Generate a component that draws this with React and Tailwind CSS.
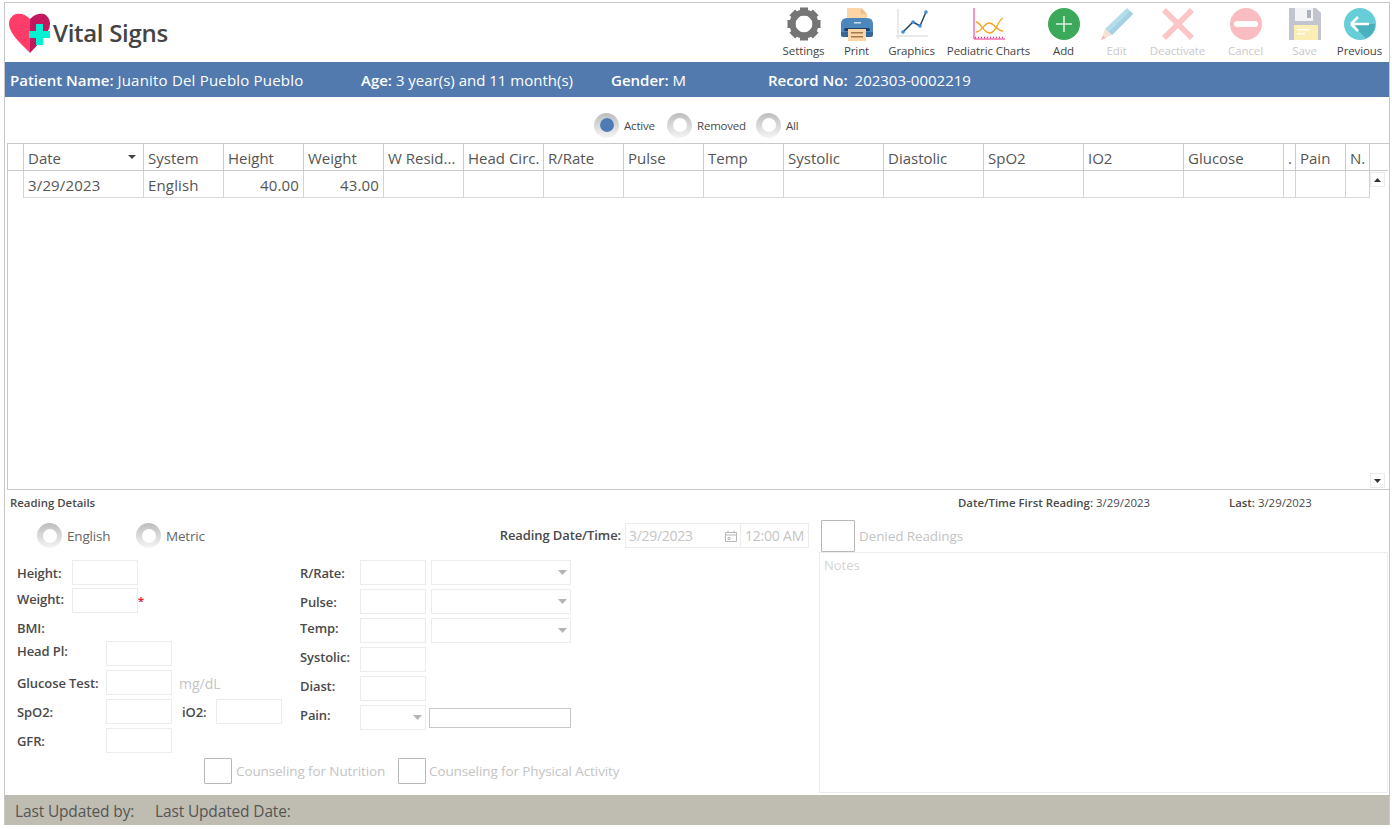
import React from "react";

const FONT = { fontFamily: '"Open Sans", "Noto Sans", sans-serif' };

const COLUMNS = [
  { label: "", width: "w-[16px]" },
  { label: "Date", width: "w-[120px]", value: "3/29/2023", sort: true },
  { label: "System", width: "w-[80px]", value: "English" },
  { label: "Height", width: "w-[80px]", value: "40.00", right: true },
  { label: "Weight", width: "w-[80px]", value: "43.00", right: true },
  { label: "W Resid...", width: "w-[80px]" },
  { label: "Head Circ.", width: "w-[80px]" },
  { label: "R/Rate", width: "w-[80px]" },
  { label: "Pulse", width: "w-[80px]" },
  { label: "Temp", width: "w-[80px]" },
  { label: "Systolic", width: "w-[100px]" },
  { label: "Diastolic", width: "w-[100px]" },
  { label: "SpO2", width: "w-[100px]" },
  { label: "IO2", width: "w-[100px]" },
  { label: "Glucose", width: "w-[100px]" },
  { label: ".", width: "w-[12px]" },
  { label: "Pain", width: "w-[50px]" },
  { label: "N.", width: "w-[24px]" },
];

const GearIcon = () => (
  <svg width="34" height="34" viewBox="0 0 34 34">
    {[0, 45, 90, 135, 180, 225, 270, 315].map((a) => (
      <rect key={a} x="13" y="0.5" width="8" height="8" fill="#757575" transform={`rotate(${a} 17 17)`} />
    ))}
    <circle cx="17" cy="17" r="11.5" fill="none" stroke="#757575" strokeWidth="6" />
  </svg>
);

const PrintIcon = () => (
  <svg width="34" height="34" viewBox="0 0 34 34">
    <path d="M7 1h14l6 6v8H7z" fill="#fcd5a6" />
    <path d="M21 1l6 6h-6z" fill="#eebd85" />
    <path d="M1 17q0-6 6-6h20q6 0 6 6v8H1z" fill="#4b86bd" />
    <path d="M1 25h32v3q0 2-2 2H3q-2 0-2-2z" fill="#33689e" />
    <rect x="4" y="21" width="26" height="3" rx="1.5" fill="#1f3f66" />
    <rect x="14" y="15" width="7" height="1.5" fill="#cfe0ef" />
    <rect x="8" y="22" width="18" height="12" fill="#fcd5a6" />
    <rect x="11" y="25" width="12" height="1.5" fill="#a07a50" />
    <rect x="11" y="29" width="12" height="1.5" fill="#a07a50" />
  </svg>
);

const GraphIcon = () => (
  <svg width="34" height="34" viewBox="0 0 34 34">
    <path d="M3 2v30M1 29h32" stroke="#e4e4e4" strokeWidth="1.5" fill="none" />
    <path d="M8 25l10-10 7 4 6-14" stroke="#23466f" strokeWidth="1.5" fill="none" />
    <circle cx="8" cy="25" r="1.8" fill="#3f92dd" />
    <circle cx="18" cy="15" r="1.8" fill="#3f92dd" />
    <circle cx="25" cy="19" r="1.8" fill="#3f92dd" />
    <circle cx="31" cy="5" r="1.8" fill="#3f92dd" />
  </svg>
);

const ChartIcon = () => (
  <svg width="34" height="34" viewBox="0 0 34 34">
    <path d="M2 1v31h31" stroke="#f0288c" strokeWidth="1" fill="none" />
    <path d="M3 30.5h30" stroke="#f0288c" strokeWidth="1.5" strokeDasharray="1 2" fill="none" />
    <path d="M4 15c5 0 7 11 14 11 6 0 8-13 13-15" stroke="#f5a21f" strokeWidth="1.3" fill="none" />
    <path d="M4 25c6 0 8-9 13-9 6 0 7 8 14 8" stroke="#f5a21f" strokeWidth="1.3" fill="none" />
  </svg>
);

const AddIcon = () => (
  <svg width="34" height="34" viewBox="0 0 34 34">
    <circle cx="17" cy="17" r="16" fill="#3ca85a" />
    <path d="M17 9v16M9 17h16" stroke="#d8f0de" strokeWidth="1.6" />
  </svg>
);

const EditIcon = () => (
  <svg width="34" height="34" viewBox="0 0 34 34">
    <path d="M27 1l6 6-21 21-7-6z" fill="#b5dcea" />
    <path d="M30 4l3 3-21 21-3-3z" fill="#a4d0e2" />
    <path d="M5 22l7 6-11 5z" fill="#f6e2d4" />
    <path d="M3 29l3 2-5 2z" fill="#f4b6bd" />
  </svg>
);

const DeactivateIcon = () => (
  <svg width="34" height="34" viewBox="0 0 34 34">
    <path d="M5 1l12 12L29 1l4 4-12 12 12 12-4 4-12-12L5 33l-4-4 12-12L1 5z" fill="#fdc6c6" />
  </svg>
);

const CancelIcon = () => (
  <svg width="34" height="34" viewBox="0 0 34 34">
    <circle cx="17" cy="17" r="16" fill="#f8bcc1" />
    <rect x="5" y="14" width="24" height="6" rx="3" fill="#ffffff" />
  </svg>
);

const SaveIcon = () => (
  <svg width="34" height="34" viewBox="0 0 34 34">
    <path d="M1 1h27l5 5v27H1z" fill="#c2c5cf" />
    <rect x="7" y="1" width="18" height="13" fill="#f4f4f6" />
    <rect x="19" y="3" width="4" height="8" fill="#aeb2bc" />
    <rect x="6" y="18" width="24" height="15" fill="#fbeeb4" />
    <rect x="9" y="22" width="12" height="1.5" fill="#ffffff" />
    <rect x="9" y="26" width="8" height="1.5" fill="#ffffff" />
  </svg>
);

const PreviousIcon = () => (
  <svg width="34" height="34" viewBox="0 0 34 34">
    <circle cx="17" cy="17" r="16" fill="#67cdd8" />
    <path d="M13 17h19a16 16 0 0 1-9 14.5L13 21z" fill="#4bb0bd" />
    <path d="M8 17h18M8 17l7-7M8 17l7 7" stroke="#ffffff" strokeWidth="2.6" fill="none" />
  </svg>
);

const TOOLBAR = [
  { label: "Settings", width: "w-[53px]", icon: <GearIcon /> },
  { label: "Print", width: "w-[53px]", icon: <PrintIcon /> },
  { label: "Graphics", width: "w-[57px]", icon: <GraphIcon /> },
  { label: "Pediatric Charts", width: "w-[97px]", icon: <ChartIcon /> },
  { label: "Add", width: "w-[53px]", icon: <AddIcon /> },
  { label: "Edit", width: "w-[53px]", icon: <EditIcon />, disabled: true },
  { label: "Deactivate", width: "w-[69px]", icon: <DeactivateIcon />, disabled: true },
  { label: "Cancel", width: "w-[67px]", icon: <CancelIcon />, disabled: true },
  { label: "Save", width: "w-[51px]", icon: <SaveIcon />, disabled: true },
  { label: "Previous", width: "w-[59px]", icon: <PreviousIcon /> },
];

const Logo = () => (
  <svg width="42" height="40" viewBox="0 0 42 40">
    <path d="M21 6C17 1 11 0 7 1 2 3 0 7 0 11c0 9 12 20 20 28l1 1z" fill="#ff3d68" />
    <path d="M21 6c4-5 10-6 14-5 4 2 6 6 6 10 0 9-12 20-20 29z" fill="#c2185f" />
    <path d="M27 11h7v7h7v7h-7v7h-7v-7h-7v-7h7z" fill="#05efd0" />
  </svg>
);

const Radio = ({ checked }) => (
  <span className="flex h-[25px] w-[25px] shrink-0 items-center justify-center rounded-full bg-linear-to-b from-[#bdbdbd] to-[#f5f5f5]">
    <span className="flex h-[14px] w-[14px] items-center justify-center rounded-full bg-white">
      {checked && <span className="block h-[14px] w-[14px] rounded-full bg-[#4f7bb5]" />}
    </span>
  </span>
);

const Field = ({ className = "w-[66px]" }) => (
  <div className={`h-[25px] shrink-0 border border-[#ececec] bg-white ${className}`} />
);

const Caret = () => (
  <svg width="9" height="5" viewBox="0 0 9 5" className="shrink-0">
    <path d="M0 0h9L4.5 5z" fill="#b4b4b4" />
  </svg>
);

const SelectField = ({ className = "w-[140px]" }) => (
  <div className={`flex h-[25px] shrink-0 items-center justify-end border border-[#ececec] bg-white pr-[3px] ${className}`}>
    <Caret />
  </div>
);

const Label = ({ children, className = "" }) => (
  <span className={`shrink-0 whitespace-nowrap text-[13px] font-semibold tracking-[-0.1px] text-[#4a4a4a] ${className}`}>{children}</span>
);

const Check = ({ className = "" }) => (
  <span className={`block shrink-0 rounded-[1px] border border-[#b8b8b8] bg-white ${className}`} />
);

const VitalRow = ({ label, children, labelClass = "" }) => (
  <div className="flex h-[25px] items-center">
    <Label className={`w-[60px] ${labelClass}`}>{label}</Label>
    <Field />
    {children}
  </div>
);

export default function App() {
  return (
    <div className="h-[829px] w-full overflow-hidden bg-white pl-[4px] pt-[2px]" style={FONT}>
      <div className="flex h-[823px] w-[1386px] flex-col border-x border-t border-[#c8c8c8]">
        <header className="flex h-[59px] items-start justify-between">
          <div className="flex items-center pl-[4px] pt-[10px]">
            <Logo />
            <h1 className="ml-[2px] text-[24px] font-semibold leading-[40px] tracking-[-0.3px] text-[#444444]">Vital Signs</h1>
          </div>
          <div className="flex pt-[4px]">
            {TOOLBAR.map((item) => (
              <div key={item.label} className={`flex flex-col items-center ${item.width}`}>
                {item.icon}
                <span
                  className={`mt-[2px] whitespace-nowrap text-[11.5px] leading-[16px] tracking-[-0.1px] ${
                    item.disabled ? "text-[#c9c9c9]" : "text-[#444444]"
                  }`}
                >
                  {item.label}
                </span>
              </div>
            ))}
          </div>
        </header>

        <div className="flex h-[35px] items-center bg-[#527aae] pl-[5px] pt-[2px] text-[15px] text-white">
          <span className="w-[351px] whitespace-nowrap">
            <b className="font-semibold">Patient Name:</b> <span className="tracking-[0.2px]">Juanito Del Pueblo Pueblo</span>
          </span>
          <span className="w-[250px] whitespace-nowrap">
            <b className="font-semibold">Age:</b> 3 year(s) and 11 month(s)
          </span>
          <span className="w-[157px] whitespace-nowrap">
            <b className="font-semibold">Gender:</b> M
          </span>
          <span className="whitespace-nowrap">
            <b className="font-semibold">Record No:</b>
            <span className="ml-[7px]">202303-0002219</span>
          </span>
        </div>

        <div className="flex h-[46px] items-center pl-[589px] pt-[10px] text-[11.5px] tracking-[-0.2px] text-[#4a4a4a]">
          <Radio checked />
          <span className="ml-[5px] w-[43px] pt-[2px]">Active</span>
          <Radio />
          <span className="ml-[5px] w-[59px] pt-[2px]">Removed</span>
          <Radio />
          <span className="ml-[5px] pt-[2px]">All</span>
        </div>

        <section className="ml-[2px] flex h-[347px] flex-col border border-r-0 border-[#c8c8c8]">
          <div className="flex h-[27px] w-[1380px] border-b border-[#c8ccd2]">
            {COLUMNS.map((col, i) => (
              <div
                key={col.label + i}
                className={`relative flex shrink-0 items-center overflow-hidden whitespace-nowrap border-r border-[#c8ccd2] pl-[4px] pt-[2px] text-[15px] text-[#555555] ${col.width}`}
              >
                {col.label}
                {col.sort && (
                  <svg width="8" height="4" viewBox="0 0 8 4" className="absolute right-[7px] top-[11px]">
                    <path d="M0 0h8L4 4z" fill="#444444" />
                  </svg>
                )}
              </div>
            ))}
          </div>
          <div className="flex min-h-0 flex-1">
            <div className="flex h-[27px] w-[1361px]">
              {COLUMNS.map((col, i) => (
                <div
                  key={col.label + i}
                  className={`flex shrink-0 items-center whitespace-nowrap border-r border-[#d0d4da] px-[4px] pt-[2px] text-[15px] tracking-[0.15px] text-[#555555] ${
                    i === 0 ? "" : "border-b border-b-[#d8dade]"
                  } ${col.right ? "justify-end" : ""} ${col.width}`}
                >
                  {col.value}
                </div>
              ))}
            </div>
            <div className="ml-[1px] flex w-[16px] flex-col justify-between pb-[1px] pt-[1px]">
              <div className="flex h-[15px] w-[15px] items-center justify-center border border-[#ececec]">
                <svg width="7" height="4" viewBox="0 0 7 4"><path d="M3.5 0L7 4H0z" fill="#333333" /></svg>
              </div>
              <div className="flex h-[15px] w-[15px] items-center justify-center border border-[#ececec]">
                <svg width="7" height="4" viewBox="0 0 7 4"><path d="M0 0h7L3.5 4z" fill="#333333" /></svg>
              </div>
            </div>
          </div>
        </section>

        <div className="flex h-[26px] items-center pl-[5px] text-[11.4px] text-[#4a4a4a]">
          <b className="w-[948px] font-semibold">Reading Details</b>
          <span className="w-[271px] whitespace-nowrap">
            <b className="font-semibold">Date/Time First Reading:</b> 3/29/2023
          </span>
          <span className="whitespace-nowrap">
            <b className="font-semibold">Last:</b> 3/29/2023
          </span>
        </div>

        <div className="flex min-h-0 flex-1">
          <div className="w-[815px] shrink-0 pt-[7px]">
            <div className="flex h-[25px] items-center pl-[32px] text-[13.5px] tracking-[-0.2px] text-[#666666]">
              <Radio />
              <span className="ml-[5px] w-[69px] pt-[2px]">English</span>
              <Radio />
              <span className="ml-[5px] w-[289px] pt-[2px]">Metric</span>
              <Label className="w-[166px] text-right text-[13.5px]">Reading Date/Time:</Label>
              <div className="ml-[4px] flex h-[25px] w-[116px] items-center justify-between border border-[#ececec] px-[3px] text-[14px] text-[#c4c4c4]">
                <span className="tracking-[-0.3px]">3/29/2023</span>
                <svg width="12" height="12" viewBox="0 0 12 12" fill="none" stroke="#b8b8b8" strokeWidth="1">
                  <path d="M.5 2.5h11v9H.5zM.5 5h11M3 .5v2M9 .5v2M3 7.5h2v2H3z" />
                </svg>
              </div>
              <div className="flex h-[25px] w-[68px] items-center justify-center whitespace-nowrap border border-l-0 border-[#ececec] text-[14px] text-[#c4c4c4]">
                12:00 AM
              </div>
            </div>

            <div className="mt-[12px] flex pl-[12px]">
              <div className="w-[283px] shrink-0">
                <div className="flex h-[25px] items-center">
                  <Label className="w-[55px] pt-[2px]">Height:</Label>
                  <Field />
                </div>
                <div className="mt-[3px] flex h-[25px] items-center">
                  <Label className="w-[55px] pb-[2px]">Weight:</Label>
                  <Field />
                  <span className="text-[11px] font-bold leading-none text-[#ee2233]">*</span>
                </div>
                <div className="flex h-[28px] items-end">
                  <Label className="pb-[1px] leading-[24px]">BMI:</Label>
                </div>
                <div className="flex h-[25px] items-center">
                  <Label className="w-[89px] pb-[4px]">Head Pl:</Label>
                  <Field />
                </div>
                <div className="mt-[4px] flex h-[25px] items-center">
                  <Label className="w-[89px] pt-[2px]">Glucose Test:</Label>
                  <Field />
                  <span className="ml-[7px] pt-[2px] text-[14px] text-[#c4c4c4]">mg/dL</span>
                </div>
                <div className="mt-[4px] flex h-[25px] items-center">
                  <Label className="w-[89px] pt-[2px]">SpO2:</Label>
                  <Field />
                  <Label className="ml-[10px] w-[34px] pt-[2px]">iO2:</Label>
                  <Field />
                </div>
                <div className="mt-[4px] flex h-[25px] items-center">
                  <Label className="w-[89px] pt-[2px]">GFR:</Label>
                  <Field />
                </div>
              </div>

              <div className="flex flex-col gap-[4px]">
                <VitalRow label="R/Rate:" labelClass="pt-[2px]">
                  <SelectField className="ml-[5px] w-[140px]" />
                </VitalRow>
                <VitalRow label="Pulse:" labelClass="pt-[2px]">
                  <SelectField className="ml-[5px] w-[140px]" />
                </VitalRow>
                <VitalRow label="Temp:" labelClass="pb-[4px]">
                  <SelectField className="ml-[5px] w-[140px]" />
                </VitalRow>
                <VitalRow label="Systolic:" labelClass="pb-[4px]" />
                <VitalRow label="Diast:" labelClass="pb-[4px]" />
                <div className="flex h-[25px] items-center">
                  <Label className="w-[60px] pb-[4px]">Pain:</Label>
                  <div className="flex h-[25px] w-[66px] items-center justify-end border border-[#ececec] pr-[3px]">
                    <Caret />
                  </div>
                  <div className="ml-[3px] h-[20px] w-[142px] border border-[#c8c8c8]" />
                </div>
              </div>
            </div>

            <div className="mt-[5px] flex h-[26px] items-center pl-[199px] text-[13.5px] tracking-[-0.1px] text-[#c4c4c4]">
              <Check className="h-[26px] w-[28px]" />
              <span className="ml-[4px] w-[162px] whitespace-nowrap">Counseling for Nutrition</span>
              <Check className="h-[26px] w-[28px]" />
              <span className="ml-[3px] whitespace-nowrap">Counseling for Physical Activity</span>
            </div>
          </div>

          <div className="flex min-w-0 flex-1 flex-col pt-[4px]">
            <div className="flex h-[32px] items-center pl-[1px] text-[13.5px] tracking-[-0.1px] text-[#c4c4c4]">
              <Check className="h-[32px] w-[34px]" />
              <span className="ml-[4px]">Denied Readings</span>
            </div>
            <div className="-ml-[1px] mr-[1px] h-[241px] border border-[#ececec] px-[4px] py-[3px] text-[13px] leading-[18px] text-[#d4d4d4]">
              Notes
            </div>
          </div>
        </div>

        <footer className="flex h-[30px] shrink-0 items-center bg-[#bfbdb1] pl-[10px] pt-[4px] text-[15.5px] tracking-[-0.15px] text-[#555555]">
          <span className="w-[140px] whitespace-nowrap">Last Updated by:</span>
          <span className="whitespace-nowrap">Last Updated Date:</span>
        </footer>
      </div>
    </div>
  );
}
